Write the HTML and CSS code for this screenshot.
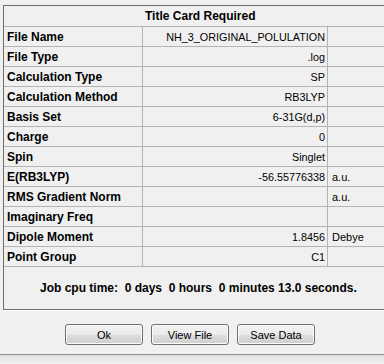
FILE: index.html
```html
<!DOCTYPE html>
<html lang="en">
<head>
  <meta charset="UTF-8">
  <title>Title Card Required</title>
  <link rel="stylesheet" href="styles.css">
</head>
<body>

  <!-- results group -->
  <div class="frame">
    <div class="row head">
      <div class="cell title">Title Card Required</div>
    </div>
    <div class="row"><div class="cell label">File Name</div><div class="cell value">NH_3_ORIGINAL_POLULATION</div><div class="cell unit"></div></div>
    <div class="row"><div class="cell label">File Type</div><div class="cell value">.log</div><div class="cell unit"></div></div>
    <div class="row"><div class="cell label">Calculation Type</div><div class="cell value">SP</div><div class="cell unit"></div></div>
    <div class="row"><div class="cell label">Calculation Method</div><div class="cell value">RB3LYP</div><div class="cell unit"></div></div>
    <div class="row"><div class="cell label">Basis Set</div><div class="cell value">6-31G(d,p)</div><div class="cell unit"></div></div>
    <div class="row"><div class="cell label">Charge</div><div class="cell value">0</div><div class="cell unit"></div></div>
    <div class="row"><div class="cell label">Spin</div><div class="cell value">Singlet</div><div class="cell unit"></div></div>
    <div class="row"><div class="cell label">E(RB3LYP)</div><div class="cell value">-56.55776338</div><div class="cell unit">a.u.</div></div>
    <div class="row"><div class="cell label">RMS Gradient Norm</div><div class="cell value"></div><div class="cell unit">a.u.</div></div>
    <div class="row"><div class="cell label">Imaginary Freq</div><div class="cell value"></div><div class="cell unit"></div></div>
    <div class="row"><div class="cell label">Dipole Moment</div><div class="cell value">1.8456</div><div class="cell unit">Debye</div></div>
    <div class="row"><div class="cell label">Point Group</div><div class="cell value">C1</div><div class="cell unit"></div></div>

    <div class="cpu">Job cpu time:  0 days  0 hours  0 minutes 13.0 seconds.</div>
  </div>

  <div class="buttons">
    <button class="btn">Ok</button>
    <button class="btn">View File</button>
    <button class="btn">Save Data</button>
  </div>

  <div class="statusbar"></div>

</body>
</html>
```

FILE: styles.css
```css
body {
  margin: 0;
  width: 384px;
  height: 364px;
  overflow: hidden;
  background: #f0f0f0;
  font-family: 'Liberation Sans', Arial, sans-serif;
  font-size: 11px;
  color: #000;
}

.frame {
  margin: 5px 0 0 3px;
  width: 381px;
  box-sizing: border-box;
  border-top: 1px solid #6e6e6e;
  border-left: 1px solid #6e6e6e;
  border-bottom: 1px solid #6e6e6e;
  box-shadow: 0 1px 0 #fff;
}

.row {
  display: grid;
  grid-template-columns: 139px 185px 1fr;
  height: 20px;
  border-bottom: 1px solid #b4b4b4;
  box-sizing: border-box;
}

.row.head {
  display: block;
  height: 21px;
}

.cell {
  display: flex;
  align-items: center;
  white-space: nowrap;
  overflow: hidden;
}

.title {
  height: 20px;
  justify-content: flex-start;
  padding-left: 141px;
  font-weight: bold;
  font-size: 12px;
}

.label {
  padding-left: 3px;
  font-weight: bold;
  font-size: 12px;
  border-right: 1px solid #b4b4b4;
}

.value {
  justify-content: flex-end;
  padding-right: 2px;
  font-size: 10.8px;
  border-right: 1px solid #b4b4b4;
}

.unit {
  padding-left: 4px;
}

.cpu {
  height: 42px;
  display: flex;
  align-items: center;
  padding-left: 36px;
  white-space: pre;
  font-weight: bold;
  font-size: 12px;
}

.buttons {
  display: flex;
  gap: 8px;
  padding: 14px 0 0 65px;
}

.btn {
  width: 78px;
  height: 21px;
  padding: 0;
  font-family: 'Liberation Sans', Arial, sans-serif;
  font-size: 11px;
  color: #000;
  border: 1px solid #707070;
  border-radius: 3px;
  background: linear-gradient(#f2f2f2 0%, #ebebeb 50%, #dddddd 51%, #cfcfcf 100%);
  box-shadow: inset 0 0 0 1px #fcfcfc;
}

.statusbar {
  margin-top: 9px;
  height: 10px;
  border-top: 1px solid #8c8c8c;
  background: linear-gradient(#e0e0e0, #f4f4f4);
}
```
